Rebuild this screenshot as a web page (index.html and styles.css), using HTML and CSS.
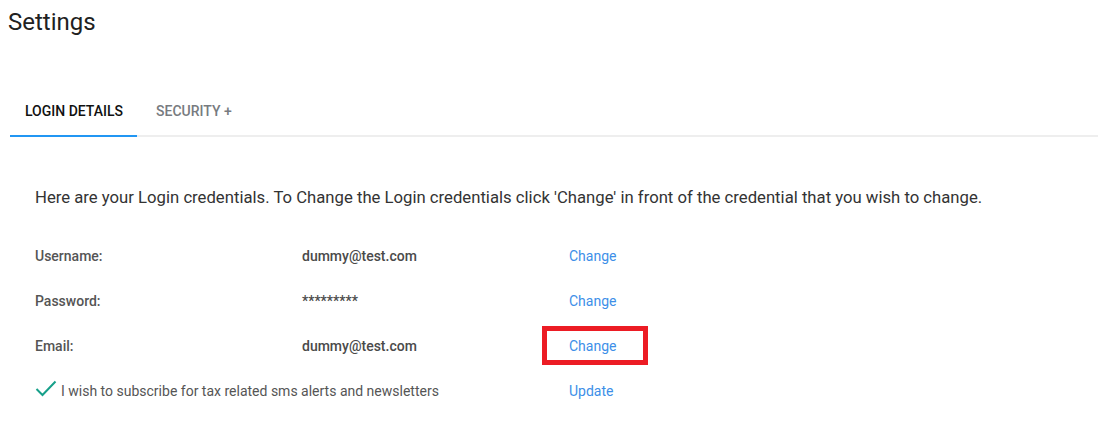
FILE: index.html
```html
<!DOCTYPE html>
<html lang="en">
  <head>
    <meta charset="UTF-8" />
    <meta name="viewport" content="width=device-width, initial-scale=1.0" />
    <title>Settings</title>
    <link rel="stylesheet" href="styles.css">
  </head>
  <body>
    <!-- Page title -->
    <h1 class="page-title">Settings</h1>

    <!-- Tabs -->
    <div class="tabs">
      <div class="tab tab-active">LOGIN DETAILS</div>
      <div class="tab">SECURITY +</div>
    </div>

    <!-- Login details panel -->
    <div class="panel">
      <p class="intro">
        Here are your Login credentials. To Change the Login credentials click 'Change' in front of the credential that you wish to change.
      </p>

      <div class="cred-row">
        <span class="cred-label">Username:</span>
        <span class="cred-value">dummy@test.com</span>
        <a class="cred-link" href="#">Change</a>
      </div>

      <div class="cred-row">
        <span class="cred-label">Password:</span>
        <span class="cred-value">*********</span>
        <a class="cred-link" href="#">Change</a>
      </div>

      <div class="cred-row">
        <span class="cred-label">Email:</span>
        <span class="cred-value">dummy@test.com</span>
        <a class="cred-link cred-link-marked" href="#">Change</a>
      </div>

      <div class="cred-row">
        <span class="subscribe">
          <svg class="check" width="22" height="17" viewBox="0 0 22 17">
            <path d="M1.5 9 L7.5 15 L20.5 1.5" fill="none" stroke="#17a08a" stroke-width="2" />
          </svg>
          I wish to subscribe for tax related sms alerts and newsletters
        </span>
        <a class="cred-link" href="#">Update</a>
      </div>
    </div>
  </body>
</html>
```

FILE: styles.css
```css
body {
  margin: 0;
  font-family: Roboto, "Liberation Sans", sans-serif;
  color: #212121;
  background: #fff;
}

.page-title {
  margin: 0;
  padding: 8px 0 0 8px;
  font-size: 24px;
  font-weight: 400;
  line-height: 28px;
}

/* Tab strip */
.tabs {
  display: flex;
  margin: 53px 12px 0 10px;
  border-bottom: 2px solid #eeeeee;
}

.tab {
  padding: 14px 14px 16px 15px;
  font-size: 14px;
  font-weight: 500;
  line-height: 16px;
  color: #777b80;
  margin-bottom: -2px;
  border-bottom: 2px solid transparent;
}

.tab + .tab {
  padding-left: 19px;
}

.tab-active {
  color: #111;
  border-bottom-color: #2196f3;
}

/* Credentials */
.panel {
  padding: 49px 0 0 35px;
}

.intro {
  margin: 0 0 23px;
  font-size: 16.7px;
  line-height: 24px;
  color: #333;
}

.cred-row {
  display: grid;
  grid-template-columns: 267px 267px auto;
  align-items: center;
  height: 45px;
  font-size: 14px;
}

.cred-label {
  font-weight: 500;
  color: #555;
}

.cred-value {
  font-weight: 500;
  color: #4a4a4a;
}

.cred-link {
  color: #3d8fe8;
  text-decoration: none;
  justify-self: start;
  position: relative;
}

/* red highlight box drawn over the email link */
.cred-link-marked::after {
  content: "";
  position: absolute;
  left: -27px;
  top: -12px;
  width: 96px;
  height: 29px;
  border: 5px solid #ec1c24;
}

.subscribe {
  grid-column: 1 / 3;
  display: flex;
  align-items: center;
  gap: 4px;
  color: #555;
}

.check {
  margin-top: -4px;
}
```
